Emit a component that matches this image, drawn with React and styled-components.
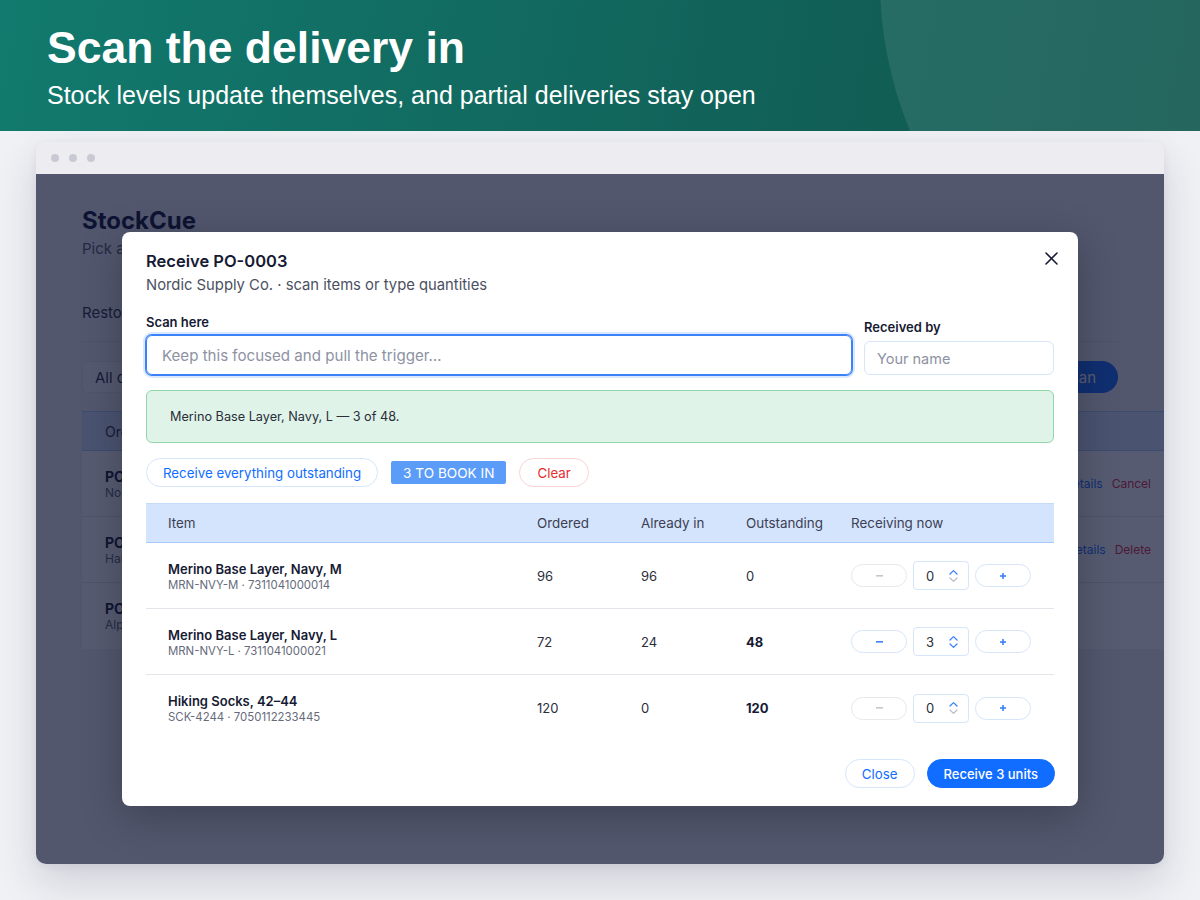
import React from "react";
import styled, { createGlobalStyle } from "styled-components";

const Global = createGlobalStyle`
  * { box-sizing: border-box; }
  html, body { margin: 0; padding: 0; }
  body { background: #f0f1f5; font-family: "Inter", "Noto Sans", sans-serif; width: 1200px; height: 900px; overflow: hidden; }
`;

const Banner = styled.header`
  position: relative;
  height: 131px;
  overflow: hidden;
  background: linear-gradient(100deg, #127a6e 0%, #115f56 70%, #105850 100%);
  padding: 22px 47px 0;
  font-family: "Liberation Sans", Arial, sans-serif;
  color: #fff;
`;

const Orb = styled.div`
  position: absolute;
  left: 880px;
  top: -415px;
  width: 790px;
  height: 790px;
  border-radius: 50%;
  background: rgba(255, 255, 255, 0.09);
`;

const BannerTitle = styled.h1`
  position: relative;
  margin: 0;
  font-size: 44.5px;
  line-height: 52px;
  font-weight: 700;
`;

const BannerSub = styled.p`
  position: relative;
  margin: 6px 0 0;
  font-size: 25px;
  line-height: 30px;
`;

const Stage = styled.div`
  padding: 11px 36px 0;
`;

const Window = styled.div`
  height: 722px;
  border-radius: 10px;
  overflow: hidden;
  display: flex;
  flex-direction: column;
  box-shadow: 0 18px 40px rgba(30, 36, 60, 0.16), 0 2px 8px rgba(30, 36, 60, 0.06);
`;

const TitleBar = styled.div`
  height: 32px;
  flex: none;
  background: #edecf1;
  display: flex;
  align-items: center;
  gap: 10px;
  padding-left: 15px;
`;

const Dot = styled.span`
  width: 8px;
  height: 8px;
  border-radius: 50%;
  background: #c9c9d3;
`;

const Content = styled.div`
  position: relative;
  flex: 1;
  background: #eef0f3;
  overflow: hidden;
`;

const Page = styled.div`
  padding: 32px 0 0 46px;
  color: #111530;
`;

const Brand = styled.div`
  font-size: 24px;
  line-height: 30px;
  font-weight: 700;
  color: #0c1030;
`;

const Lead = styled.div`
  margin-top: 3px;
  font-size: 15px;
  line-height: 20px;
  color: #555a6c;
`;

const Tabs = styled.div`
  margin: 44px 46px 0 0;
  padding-bottom: 18px;
  border-bottom: 1px solid #dde0e6;
  font-size: 15px;
  line-height: 20px;
  color: #2a2e40;
`;

const Toolbar = styled.div`
  margin: 19px 46px 0 0;
  display: flex;
  justify-content: space-between;
  align-items: center;
`;

const SelectBox = styled.div`
  width: 260px;
  height: 32px;
  border-radius: 6px;
  background: #f8f9fb;
  border: 1px solid #e3e6ec;
  padding: 0 12px;
  display: flex;
  align-items: center;
  font-size: 15px;
  color: #2a2e40;
`;

const PrimaryPill = styled.div`
  height: 32px;
  padding: 0 22px;
  border-radius: 16px;
  background: #116dff;
  color: #fff;
  font-size: 15px;
  display: flex;
  align-items: center;
`;

const BgTable = styled.div`
  margin-top: 18px;
  background: #fff;
`;

const BgHead = styled.div`
  height: 40px;
  background: #d4e4fc;
  border-top: 1px solid #a8c8f8;
  border-bottom: 1px solid #a8c8f8;
  display: flex;
  align-items: center;
  padding-left: 23px;
  font-size: 14px;
  color: #2a2e40;
`;

const BgRow = styled.div`
  height: 66px;
  display: flex;
  align-items: center;
  justify-content: space-between;
  padding: 0 13px 0 23px;
  border-bottom: 1px solid #e3e5ea;
  &:last-child { border-bottom: none; }
`;

const BgCell = styled.div`
  display: flex;
  flex-direction: column;
`;

const BgStrong = styled.span`
  font-size: 14px;
  font-weight: 700;
  color: #111530;
`;

const BgSmall = styled.span`
  font-size: 12px;
  color: #5a5f70;
`;

const BgActions = styled.div`
  display: flex;
  gap: 9px;
  font-size: 12px;
`;

const BgLink = styled.span`
  color: ${(p) => (p.$danger ? "#d6263b" : "#116dff")};
`;

const Overlay = styled.div`
  position: absolute;
  inset: 0;
  background: rgba(15, 22, 52, 0.7);
  display: flex;
  align-items: center;
  justify-content: center;
`;

const Modal = styled.div`
  position: relative;
  width: 956px;
  background: #fff;
  border-radius: 8px;
  padding: 18px 24px 18px;
  box-shadow: 0 10px 40px rgba(0, 0, 0, 0.25);
  color: #161a33;
`;

const CloseX = styled.button`
  position: absolute;
  top: 16px;
  right: 17px;
  width: 20px;
  height: 20px;
  border: none;
  background: none;
  padding: 0;
  display: flex;
  align-items: center;
  justify-content: center;
  color: #161a33;
`;

const ModalTitle = styled.h2`
  margin: 0;
  font-size: 16.5px;
  line-height: 22px;
  font-weight: 600;
`;

const ModalSub = styled.p`
  margin: 3px 0 0;
  font-size: 14.8px;
  line-height: 20px;
  color: #4b5060;
`;

const FieldRow = styled.div`
  margin-top: 20px;
  display: flex;
  align-items: flex-end;
  gap: 12px;
`;

const Field = styled.div`
  display: flex;
  flex-direction: column;
  gap: ${(p) => (p.$tight ? "5px" : "6px")};
  width: ${(p) => p.$w};
`;

const Label = styled.label`
  font-size: 13px;
  line-height: 15px;
  font-weight: 600;
  color: #161a33;
`;

const Input = styled.div`
  height: ${(p) => (p.$focus ? "40px" : "34px")};
  border-radius: 6px;
  border: 1px solid ${(p) => (p.$focus ? "#3b82f6" : "#d7e5fb")};
  box-shadow: ${(p) => (p.$focus ? "0 0 0 1px #3b82f6, 0 0 0 3px rgba(59,130,246,0.18)" : "none")};
  display: flex;
  align-items: center;
  padding: 0 ${(p) => (p.$focus ? "15px" : "12px")};
  font-size: ${(p) => (p.$focus ? "15.1px" : "14.5px")};
  color: #8d92a3;
`;

const Notice = styled.div`
  margin-top: 15px;
  height: 53px;
  border-radius: 6px;
  background: #e0f3e8;
  border: 1px solid #93d6a9;
  display: flex;
  align-items: center;
  padding-left: 23px;
  font-size: 12.7px;
  color: #2a2e3a;
`;

const Actions = styled.div`
  margin-top: 15px;
  display: flex;
  align-items: center;
  gap: 13px;
`;

const Pill = styled.button`
  height: 29px;
  padding: 0 ${(p) => p.$px || "16px"};
  border-radius: 15px;
  background: ${(p) => (p.$solid ? "#116dff" : "#fff")};
  border: 1px solid ${(p) => (p.$solid ? "#116dff" : p.$danger ? "#fbd3d3" : "#d7e5fb")};
  color: ${(p) => (p.$solid ? "#fff" : p.$danger ? "#e62e2e" : "#116dff")};
  font-family: inherit;
  font-size: ${(p) => (p.$solid ? "13px" : "13.3px")};
  font-weight: ${(p) => (p.$solid ? 500 : 400)};
  display: flex;
  align-items: center;
`;

const Badge = styled.span`
  height: 23px;
  padding: 0 12px;
  background: #5b9cf8;
  color: #fff;
  font-size: 13.6px;
  display: flex;
  align-items: center;
  border-radius: 2px;
`;

const Table = styled.div`
  margin-top: 16px;
`;

const cols = "391px 104px 105px 105px 1fr";

const HeadRow = styled.div`
  display: grid;
  grid-template-columns: ${cols};
  height: 40px;
  align-items: center;
  background: #d4e4fc;
  border-top: 1px solid #c5daf9;
  border-bottom: 1px solid #a8c8f8;
  font-size: 13.4px;
  color: #3b4054;
  & > span:first-child { padding-left: 22px; }
`;

const Row = styled.div`
  display: grid;
  grid-template-columns: ${cols};
  height: 66px;
  align-items: center;
  border-bottom: 1px solid #e3e5ea;
  font-size: 13px;
  color: #2a2e3a;
  &:last-child { border-bottom: none; }
`;

const ItemCell = styled.div`
  padding-left: 22px;
  display: flex;
  flex-direction: column;
  gap: 1px;
  padding-top: 1px;
`;

const ItemName = styled.span`
  font-size: 13px;
  font-weight: 600;
  color: #161a33;
  line-height: 16px;
`;

const Sku = styled.span`
  font-size: 11.4px;
  color: #666b7b;
  line-height: 14px;
`;

const Num = styled.span`
  font-weight: ${(p) => (p.$bold ? 700 : 400)};
  color: ${(p) => (p.$bold ? "#161a33" : "#2a2e3a")};
`;

const Stepper = styled.div`
  display: flex;
  align-items: center;
  gap: 6px;
`;

const StepBtn = styled.button`
  width: 56px;
  height: 23px;
  border-radius: 12px;
  background: #fff;
  border: 1px solid ${(p) => (p.$off ? "#e6e8ec" : "#d7e5fb")};
  color: ${(p) => (p.$off ? "#c3c7cf" : "#3b82f6")};
  display: flex;
  align-items: center;
  justify-content: center;
  padding: 0;
`;

const QtyBox = styled.div`
  width: 56px;
  height: 29px;
  border-radius: 4px;
  border: 1px solid #d7e5fb;
  display: flex;
  align-items: center;
  justify-content: space-between;
  padding: 0 10px 0 12px;
  font-size: 13px;
  color: #2a2e3a;
`;

const Spin = styled.svg`
  display: block;
`;

const Footer = styled.div`
  margin-top: 18px;
  display: flex;
  justify-content: flex-end;
  gap: 12px;
  margin-right: -1px;
`;

const MinusGlyph = () => (
  <svg width="7" height="2" viewBox="0 0 7 2"><rect x="0" y="0" width="7" height="1.6" fill="currentColor" /></svg>
);
const PlusGlyph = () => (
  <svg width="6" height="6" viewBox="0 0 6 6"><rect x="0" y="2.2" width="6" height="1.6" fill="currentColor" /><rect x="2.2" y="0" width="1.6" height="6" fill="currentColor" /></svg>
);

const SpinArrows = ({ downOn }) => (
  <Spin width="9" height="14" viewBox="0 0 9 14">
    <path d="M1 5 L4.5 1.6 L8 5" fill="none" stroke="#3b82f6" strokeWidth="1.3" strokeLinecap="round" strokeLinejoin="round" />
    <path d="M1 9 L4.5 12.4 L8 9" fill="none" stroke={downOn ? "#3b82f6" : "#b9bdc6"} strokeWidth="1.3" strokeLinecap="round" strokeLinejoin="round" />
  </Spin>
);

const items = [
  { name: "Merino Base Layer, Navy, M", sku: "MRN-NVY-M · 7311041000014", ordered: 96, inn: 96, out: 0, now: 0 },
  { name: "Merino Base Layer, Navy, L", sku: "MRN-NVY-L · 7311041000021", ordered: 72, inn: 24, out: 48, now: 3 },
  { name: "Hiking Socks, 42–44", sku: "SCK-4244 · 7050112233445", ordered: 120, inn: 0, out: 120, now: 0 },
];

const bgRows = [
  { po: "PO-0003", sup: "Nordic Supply Co.", act: "Cancel" },
  { po: "PO-0002", sup: "Harbour Outdoor", act: "Delete" },
  { po: "PO-0001", sup: "Alpine Wool Ltd.", act: null },
];

export default function App() {
  return (
    <>
      <Global />
      <Banner>
        <Orb />
        <BannerTitle>Scan the delivery in</BannerTitle>
        <BannerSub>Stock levels update themselves, and partial deliveries stay open</BannerSub>
      </Banner>
      <Stage>
        <Window>
          <TitleBar>
            <Dot />
            <Dot />
            <Dot />
          </TitleBar>
          <Content>
            <Page>
              <Brand>StockCue</Brand>
              <Lead>Pick a purchase order to receive stock against it</Lead>
              <Tabs>Restock plans</Tabs>
              <Toolbar>
                <SelectBox>All orders</SelectBox>
                <PrimaryPill>New plan</PrimaryPill>
              </Toolbar>
              <BgTable>
                <BgHead>Order</BgHead>
                {bgRows.map((r) => (
                  <BgRow key={r.po}>
                    <BgCell>
                      <BgStrong>{r.po}</BgStrong>
                      <BgSmall>{r.sup}</BgSmall>
                    </BgCell>
                    {r.act && (
                      <BgActions>
                        <BgLink>Details</BgLink>
                        <BgLink $danger>{r.act}</BgLink>
                      </BgActions>
                    )}
                  </BgRow>
                ))}
              </BgTable>
            </Page>
            <Overlay>
              <Modal>
                <CloseX aria-label="Close">
                  <svg width="13" height="13" viewBox="0 0 13 13">
                    <path d="M1 1 L12 12 M12 1 L1 12" stroke="currentColor" strokeWidth="1.6" strokeLinecap="round" />
                  </svg>
                </CloseX>
                <ModalTitle>Receive PO-0003</ModalTitle>
                <ModalSub>Nordic Supply Co. · scan items or type quantities</ModalSub>
                <FieldRow>
                  <Field $w="706px" $tight>
                    <Label>Scan here</Label>
                    <Input $focus>Keep this focused and pull the trigger…</Input>
                  </Field>
                  <Field $w="190px">
                    <Label>Received by</Label>
                    <Input>Your name</Input>
                  </Field>
                </FieldRow>
                <Notice>Merino Base Layer, Navy, L — 3 of 48.</Notice>
                <Actions>
                  <Pill>Receive everything outstanding</Pill>
                  <Badge>3 TO BOOK IN</Badge>
                  <Pill $danger $px="17px">Clear</Pill>
                </Actions>
                <Table>
                  <HeadRow>
                    <span>Item</span>
                    <span>Ordered</span>
                    <span>Already in</span>
                    <span>Outstanding</span>
                    <span>Receiving now</span>
                  </HeadRow>
                  {items.map((it) => (
                    <Row key={it.name}>
                      <ItemCell>
                        <ItemName>{it.name}</ItemName>
                        <Sku>{it.sku}</Sku>
                      </ItemCell>
                      <Num>{it.ordered}</Num>
                      <Num>{it.inn}</Num>
                      <Num $bold={it.out > 0}>{it.out}</Num>
                      <Stepper>
                        <StepBtn $off={it.now === 0}>
                          <MinusGlyph />
                        </StepBtn>
                        <QtyBox>
                          <span>{it.now}</span>
                          <SpinArrows downOn={it.now > 0} />
                        </QtyBox>
                        <StepBtn>
                          <PlusGlyph />
                        </StepBtn>
                      </Stepper>
                    </Row>
                  ))}
                </Table>
                <Footer>
                  <Pill $px="16px">Close</Pill>
                  <Pill $solid $px="16px">Receive 3 units</Pill>
                </Footer>
              </Modal>
            </Overlay>
          </Content>
        </Window>
      </Stage>
    </>
  );
}
